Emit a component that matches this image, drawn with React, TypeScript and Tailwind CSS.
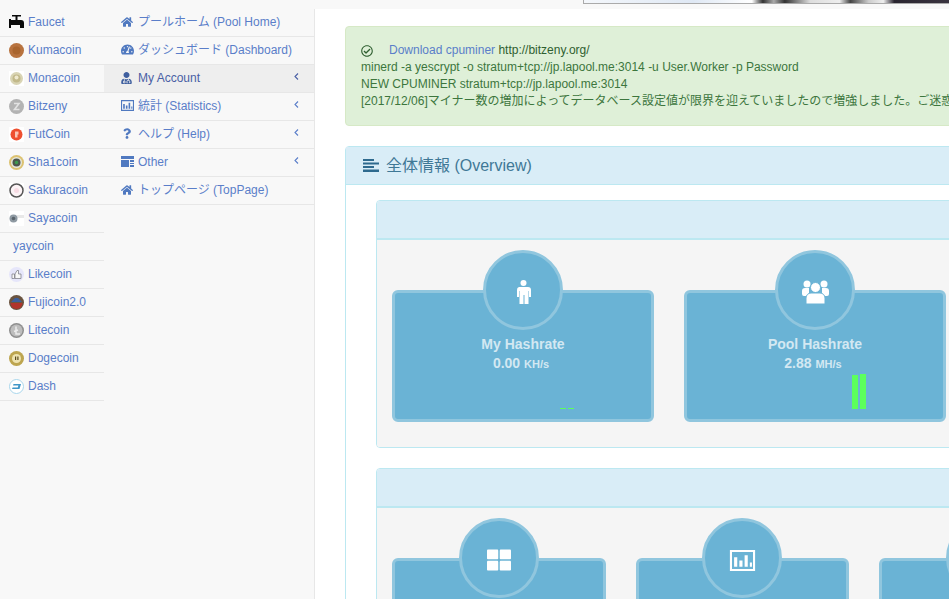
import { FaHome, FaQuestion, FaRegCheckCircle, FaTachometerAlt, FaThLarge, FaUserMd } from "react-icons/fa";
import type { ReactNode } from "react";

const Coin = ({ children, white }: { children: ReactNode; white?: boolean }) => (
  <svg viewBox="0 0 15 15" className={`w-[15px] h-[15px] shrink-0 ${white ? "bg-white" : ""}`}>
    {children}
  </svg>
);

const StatsIcon = ({ className }: { className: string }) => (
  <svg viewBox="0 0 24 20" className={className} fill="currentColor">
    <path d="M0 0h24v20H0zm2 2v16h20V2z" />
    <path d="M4 7h3v9H4zM9 10h3v6H9zM14 5h3v11h-3zM19 12h2v4h-2z" />
  </svg>
);

const OtherIcon = () => (
  <svg viewBox="0 0 13 11" className="w-[13px] h-[11px]" fill="currentColor">
    <path d="M0 0h13v3H0zM0 4h8v7H0zM9 4h4v2H9zM9 7h4v1H9zM9 9h4v2H9z" />
  </svg>
);

const Chevron = () => (
  <svg viewBox="0 0 5 7" className="w-[5px] h-[7px] -mt-[5px]" fill="none" stroke="currentColor" strokeWidth="1.1">
    <path d="M4 .5 1 3.500l3 3" />
  </svg>
);

const OverviewIcon = () => (
  <svg viewBox="0 0 16 13" className="w-[16px] h-[13px]" fill="currentColor">
    <path d="M0 0h11v2H0zM0 3.500h16v2H0zM0 7h11v2H0zM0 10.500h16V13H0z" />
  </svg>
);

const MaleIcon = () => (
  <svg viewBox="0 0 15 24" className="w-[15px] h-[24px]" fill="currentColor">
    <circle cx="7.500" cy="3" r="3" />
    <path d="M3 7h9a3 3 0 0 1 3 3v7h-2v-6h-.5v13h-4v-9h-1v9h-4V11H3v6H1v-7a3 3 0 0 1 2-3z" />
  </svg>
);

const GroupIcon = () => (
  <svg viewBox="0 0 27 24" className="w-[27px] h-[24px]" fill="currentColor">
    <circle cx="5" cy="4" r="3.500" />
    <circle cx="22" cy="4" r="3.500" />
    <path d="M0 11a3 3 0 0 1 3-3h4v8H2a2 2 0 0 1-2-2zM20 8h4a3 3 0 0 1 3 3v3a2 2 0 0 1-2 2h-5z" />
    <circle cx="13.500" cy="7.500" r="5" stroke="#6ab3d5" />
    <path d="M4 24v-6a5 5 0 0 1 5-5h9a5 5 0 0 1 5 5v6z" stroke="#6ab3d5" />
  </svg>
);

const coins: { name: string; icon: ReactNode }[] = [
  {
    name: "Faucet",
    icon: (
      <Coin>
        <path d="M3 0h9v1.600H8.500V5H12a3 3 0 0 1 3 3v5h-4V10H2v3H0V4h2v1h4.500V1.600H3z" fill="#0a0a0a" />
      </Coin>
    ),
  },
  {
    name: "Kumacoin",
    icon: (
      <Coin>
        <circle cx="7.500" cy="7.500" r="7.500" fill="#b8733f" />
        <circle cx="7.500" cy="7.500" r="4" fill="#a9652f" />
      </Coin>
    ),
  },
  {
    name: "Monacoin",
    icon: (
      <Coin white>
        <circle cx="7.500" cy="7.500" r="6.500" fill="#d9d4b4" />
        <circle cx="7.500" cy="7.500" r="4" fill="#c2b98a" />
        <circle cx="7.500" cy="6.500" r="2" fill="#efe9cf" />
      </Coin>
    ),
  },
  {
    name: "Bitzeny",
    icon: (
      <Coin>
        <circle cx="7.500" cy="7.500" r="7.500" fill="#b3b3b3" />
        <path d="M5 4.500h5L5.500 10.500h5" fill="none" stroke="#e2e2e2" strokeWidth="1.600" />
      </Coin>
    ),
  },
  {
    name: "FutCoin",
    icon: (
      <Coin white>
        <circle cx="7.500" cy="7.500" r="6" fill="#ee4f2f" />
        <path d="M6 4.500h3.500v3H8.500v3H6z" fill="#f9c6b5" />
      </Coin>
    ),
  },
  {
    name: "Sha1coin",
    icon: (
      <Coin>
        <circle cx="7.500" cy="7.500" r="7.500" fill="#dcc271" />
        <circle cx="7.500" cy="7.500" r="5.500" fill="#e6e6dc" />
        <circle cx="7.500" cy="7.500" r="4" fill="#4d564d" />
        <circle cx="7.500" cy="7.500" r="1.800" fill="#3e9a4e" />
      </Coin>
    ),
  },
  {
    name: "Sakuracoin",
    icon: (
      <Coin white>
        <circle cx="7.500" cy="7.500" r="6.500" fill="#fbf3f5" stroke="#555" strokeWidth="1.500" />
        <circle cx="7.500" cy="7.500" r="2.500" fill="#f7dbe3" />
      </Coin>
    ),
  },
  {
    name: "Sayacoin",
    icon: (
      <Coin white>
        <rect x="8" y="4" width="7" height="3" fill="#e8e8e8" />
        <circle cx="4.500" cy="7.500" r="4" fill="#8f9aa3" />
        <circle cx="4.500" cy="7.500" r="1.800" fill="#59636b" />
      </Coin>
    ),
  },
  { name: "yaycoin", icon: null },
  {
    name: "Likecoin",
    icon: (
      <Coin>
        <circle cx="7.500" cy="7.500" r="7.500" fill="#e6e6fa" />
        <path d="M3 7h2.500v4.500H3zM6 7l2-3.500h1.500V7H12v4.500H6z" fill="#f7f7f7" stroke="#77777f" strokeWidth=".7" />
      </Coin>
    ),
  },
  {
    name: "Fujicoin2.0",
    icon: (
      <Coin>
        <circle cx="7.500" cy="7.500" r="7.500" fill="#6a5440" />
        <path d="M2 7 6 3h3l4 4z" fill="#3c5f9c" />
        <path d="M1.500 8h12a6 6 0 0 1-12 0z" fill="#b0342b" />
      </Coin>
    ),
  },
  {
    name: "Litecoin",
    icon: (
      <Coin>
        <circle cx="7.500" cy="7.500" r="7.500" fill="#8f8f8f" />
        <circle cx="7.500" cy="7.500" r="6" fill="#bdbdbd" />
        <path d="M7 3.500v7.500h4M5 8.500l4-1.500" fill="none" stroke="#ececec" strokeWidth="1.500" />
      </Coin>
    ),
  },
  {
    name: "Dogecoin",
    icon: (
      <Coin>
        <circle cx="7.500" cy="7.500" r="7.500" fill="#bda54f" />
        <circle cx="7.500" cy="7.500" r="4.500" fill="#eee3b0" />
        <rect x="6" y="5.500" width="1.200" height="3.500" fill="#5a4a1e" />
        <rect x="8.300" y="5.500" width="1.200" height="3.500" fill="#5a4a1e" />
      </Coin>
    ),
  },
  {
    name: "Dash",
    icon: (
      <Coin>
        <circle cx="7.500" cy="7.500" r="7" fill="#fff" stroke="#a9d6ec" />
        <path d="M4.500 5h7.500L10.500 10H3l.6-1.600h5.200l.6-1.800H4z" fill="#3f96c8" />
      </Coin>
    ),
  },
];

const menu: { label: string; icon: ReactNode; more?: boolean; active?: boolean }[] = [
  { label: "プールホーム (Pool Home)", icon: <FaHome className="w-3 h-3" /> },
  { label: "ダッシュボード (Dashboard)", icon: <FaTachometerAlt className="w-[13px] h-[13px]" /> },
  { label: "My Account", icon: <FaUserMd className="w-[11px] h-3 text-[#3f5f9f]" />, more: true, active: true },
  { label: "統計 (Statistics)", icon: <StatsIcon className="w-[13px] h-[11px]" />, more: true },
  { label: "ヘルプ (Help)", icon: <FaQuestion className="w-[8px] h-[11px] ml-[2px]" />, more: true },
  { label: "Other", icon: <OtherIcon />, more: true },
  { label: "トップページ (TopPage)", icon: <FaHome className="w-3 h-3" /> },
];

const StatCard = ({
  width,
  icon,
  title,
  value,
  unit,
  bars,
}: {
  width: string;
  icon?: ReactNode;
  title?: string;
  value?: string;
  unit?: string;
  bars?: ReactNode;
}) => (
  <div className={`relative shrink-0 mt-[35px] h-[132px] rounded-md border-[3px] border-[#90c6de] bg-[#6ab3d5] ${width}`}>
    <div className="absolute left-1/2 top-[-43px] -ml-[40px] flex h-[80px] w-[80px] items-center justify-center rounded-full border-[3px] border-[#90c6de] bg-[#6ab3d5] text-white">
      <span className="mt-[4px] flex">{icon}</span>
    </div>
    {title && (
      <div className="pt-[41px] text-center font-bold text-[#d3e8f2]">
        <div className="text-[14px] leading-[20px]">{title}</div>
        <div className="pr-[4px] text-[14px] leading-[18px]">
          {value} <span className="text-[11px]">{unit}</span>
        </div>
      </div>
    )}
    {bars}
  </div>
);

const SubPanel = ({ children }: { children: ReactNode }) => (
  <div className="rounded border border-[#bce8f1] overflow-hidden">
    <div className="h-[39px] bg-[#d9edf7] border-b-2 border-[#bce8f1]" />
    <div className="flex gap-[30px] bg-[#f5f5f5] pl-[15px] pt-[15px] pb-[25px]">{children}</div>
  </div>
);

export default function App() {
  return (
    <div className="h-[599px] w-[949px] overflow-hidden bg-white text-[12px] font-['Liberation_Sans','Noto_Sans_CJK_JP',sans-serif]">
      {/* top strip with the banner edge */}
      <div className="flex h-[9px] justify-end bg-[#f8f8f8]">
        <div className="h-[4px] w-[366px] border-b border-l border-[#aaa] bg-[linear-gradient(90deg,#f4f7fb_0%,#dfe8f4_30%,#fff_46%,#333_49%,#aaa_52%,#333_55%,#ddd_62%,#eee_70%,#444_73%,#ccc_78%,#eee_82%,#2a2530_85%,#3a3440_100%)]" />
      </div>

      <div className="flex">
        {/* sidebar */}
        <aside className="flex h-[590px] w-[315px] shrink-0 border-r border-[#e7e7e7] bg-[#f8f8f8]">
          <ul className="w-[104px] shrink-0">
            {coins.map((c) => (
              <li
                key={c.name}
                className="flex h-[28px] items-center gap-[4px] border-b border-[#e7e7e7] pl-[9px] text-[#5a7ec9]"
              >
                {c.icon}
                <span className={c.icon ? "-mt-[2px]" : "-mt-[2px] pl-[4px]"}>{c.name}</span>
              </li>
            ))}
          </ul>
          <ul className="flex-1">
            {menu.map((m) => (
              <li
                key={m.label}
                className={`flex h-[28px] items-center border-b border-[#e7e7e7] pl-[17px] pr-[15px] ${
                  m.active ? "bg-[#eeeeee] text-[#4a5fa5]" : "text-[#5a7ec9]"
                }`}
              >
                <span className="-mt-[2px] flex w-[17px] shrink-0 justify-start text-[#5079c0]">{m.icon}</span>
                <span className="-mt-[2px] flex-1">{m.label}</span>
                {m.more && <Chevron />}
              </li>
            ))}
          </ul>
        </aside>

        {/* main content */}
        <main className="w-[1300px] shrink-0 pl-[30px] pt-[17px]">
          <div className="h-[100px] rounded border border-[#d6e9c6] bg-[#dff0d8] pl-[15px] pt-[15px] text-[#3c763d] leading-[17px]">
            <div className="flex h-[17px] items-center">
              <FaRegCheckCircle className="w-3 h-3 mr-[16px] text-[#2f5f30]" />
              <span className="text-[#5a7ec9]">Download cpuminer</span>
              <span className="text-[#2f5f30]">&nbsp;http://bitzeny.org/</span>
            </div>
            <div>minerd -a yescrypt -o stratum+tcp://jp.lapool.me:3014 -u User.Worker -p Password</div>
            <div>NEW CPUMINER stratum+tcp://jp.lapool.me:3014</div>
            <div className="whitespace-nowrap">
              [2017/12/06]マイナー数の増加によってデータベース設定値が限界を迎えていましたので増強しました。ご迷惑をおかけしました。
            </div>
          </div>

          <div className="mt-[20px] rounded border border-[#bce8f1]">
            <div className="flex h-[38px] items-center gap-[7px] border-b border-[#bce8f1] bg-[#d9edf7] pl-[17px] text-[16px] text-[#3f7896]">
              <span className="flex text-[#2e6a8e]">
                <OverviewIcon />
              </span>
              <span>全体情報 (Overview)</span>
            </div>
            <div className="flex flex-col gap-[20px] pl-[30px] pt-[15px]">
              <SubPanel>
                <StatCard
                  width="w-[262px]"
                  icon={<MaleIcon />}
                  title="My Hashrate"
                  value="0.00"
                  unit="KH/s"
                  bars={
                    <div className="absolute bottom-[10px] left-[165px] flex gap-[2px]">
                      <span className="h-px w-[6px] bg-[#5cff5c]" />
                      <span className="h-px w-[6px] bg-[#5cff5c]" />
                    </div>
                  }
                />
                <StatCard
                  width="w-[262px]"
                  icon={<GroupIcon />}
                  title="Pool Hashrate"
                  value="2.88"
                  unit="MH/s"
                  bars={
                    <div className="absolute bottom-[10px] left-[165px] flex items-end gap-[2px]">
                      <span className="h-[34px] w-[6px] bg-[#5cff5c]" />
                      <span className="h-[35px] w-[6px] bg-[#5cff5c]" />
                    </div>
                  }
                />
                <StatCard width="w-[262px]" />
              </SubPanel>
              <SubPanel>
                <StatCard width="w-[213.5px]" icon={<FaThLarge className="w-[24px] h-[24px]" />} />
                <StatCard width="w-[213.5px]" icon={<StatsIcon className="w-[27px] h-[21px]" />} />
                <StatCard width="w-[213.5px]" />
              </SubPanel>
            </div>
          </div>
        </main>
      </div>
    </div>
  );
}
